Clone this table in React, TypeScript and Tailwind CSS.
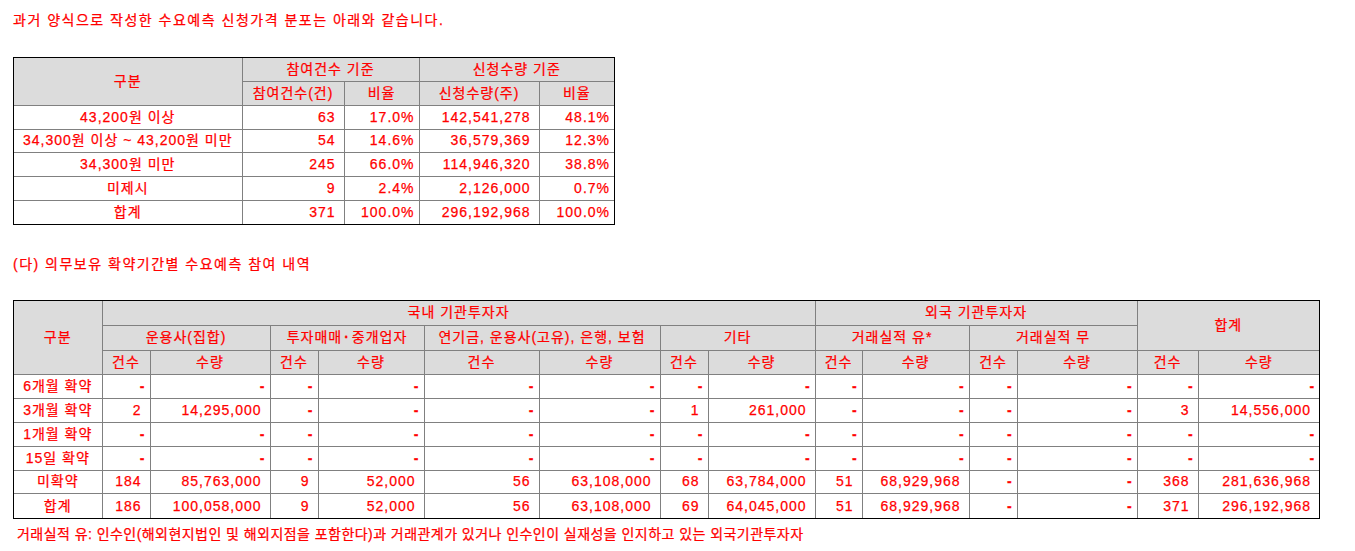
const font = "font-['Liberation_Sans','Noto_Sans_CJK_KR',sans-serif]";

const th = "border border-[#808080] bg-[#dcdcdc] text-center font-normal p-0";
const td = "border border-[#808080] p-0";

type Row1 = [string, string, string, string, string];

const table1: Row1[] = [
  ["43,200원 이상", "63", "17.0%", "142,541,278", "48.1%"],
  ["34,300원 이상 ~ 43,200원 미만", "54", "14.6%", "36,579,369", "12.3%"],
  ["34,300원 미만", "245", "66.0%", "114,946,320", "38.8%"],
  ["미제시", "9", "2.4%", "2,126,000", "0.7%"],
  ["합계", "371", "100.0%", "296,192,968", "100.0%"],
];

const table2: string[][] = [
  ["6개월 확약", "-", "-", "-", "-", "-", "-", "-", "-", "-", "-", "-", "-", "-", "-"],
  ["3개월 확약", "2", "14,295,000", "-", "-", "-", "-", "1", "261,000", "-", "-", "-", "-", "3", "14,556,000"],
  ["1개월 확약", "-", "-", "-", "-", "-", "-", "-", "-", "-", "-", "-", "-", "-", "-"],
  ["15일 확약", "-", "-", "-", "-", "-", "-", "-", "-", "-", "-", "-", "-", "-", "-"],
  ["미확약", "184", "85,763,000", "9", "52,000", "56", "63,108,000", "68", "63,784,000", "51", "68,929,968", "-", "-", "368", "281,636,968"],
  ["합계", "186", "100,058,000", "9", "52,000", "56", "63,108,000", "69", "64,045,000", "51", "68,929,968", "-", "-", "371", "296,192,968"],
];

const widths2 = [88, 48, 120, 48, 106, 115, 121, 48, 107, 47, 107, 48, 120, 61, 121];

function Num({ v }: { v: string }) {
  const pad = v === "-" || v.endsWith("%") ? "pr-[4px]" : "pr-[8px]";
  return (
    <td className={`${td} text-right ${pad}`}>
      {v === "-" ? <span className="font-bold">-</span> : v}
    </td>
  );
}

export default function App() {
  return (
    <div
      className={`${font} bg-white min-h-screen text-[14px] tracking-[1px] text-[#ff0000] px-[13px] pt-[12px] [-webkit-text-stroke:0.25px_#ff0000]`}
    >
      <p className="leading-[17px] tracking-[1.5px]">과거 양식으로 작성한 수요예측 신청가격 분포는 아래와 같습니다.</p>

      {/* 신청가격 분포 */}
      <div className="mt-[28px] w-[602px] border border-black">
        <table className="w-[600px] table-fixed border-collapse border-hidden leading-[17px]">
          <colgroup>
            <col className="w-[228px]" />
            <col className="w-[102px]" />
            <col className="w-[75px]" />
            <col className="w-[120px]" />
            <col className="w-[75px]" />
          </colgroup>
          <thead>
            <tr className="h-[23.7px]">
              <th rowSpan={2} className={th}>구분</th>
              <th colSpan={2} className={th}>참여건수 기준</th>
              <th colSpan={2} className={th}>신청수량 기준</th>
            </tr>
            <tr className="h-[23.7px]">
              <th className={th}>참여건수(건)</th>
              <th className={th}>비율</th>
              <th className={th}>신청수량(주)</th>
              <th className={th}>비율</th>
            </tr>
          </thead>
          <tbody>
            {table1.map((r) => (
              <tr key={r[0]} className="h-[23.7px]">
                <td className={`${td} text-center`}>{r[0]}</td>
                {r.slice(1).map((v, i) => (
                  <Num key={i} v={v} />
                ))}
              </tr>
            ))}
          </tbody>
        </table>
      </div>

      <p className="mt-[31px] leading-[17px] tracking-[1.5px]">(다) 의무보유 확약기간별 수요예측 참여 내역</p>

      {/* 확약기간별 */}
      <div className="mt-[27px] w-[1307px] border border-black">
        <table className="w-[1305px] table-fixed border-collapse border-hidden leading-[17px]">
          <colgroup>
            {widths2.map((w, i) => (
              <col key={i} style={{ width: w }} />
            ))}
          </colgroup>
          <thead>
            <tr className="h-[24.7px]">
              <th rowSpan={3} className={th}>구분</th>
              <th colSpan={8} className={th}>국내 기관투자자</th>
              <th colSpan={4} className={th}>외국 기관투자자</th>
              <th colSpan={2} rowSpan={2} className={th}>합계</th>
            </tr>
            <tr className="h-[24.7px]">
              <th colSpan={2} className={th}>운용사(집합)</th>
              <th colSpan={2} className={th}>
                투자매매<span className="mx-[2px] font-bold">·</span>중개업자
              </th>
              <th colSpan={2} className={th}>연기금, 운용사(고유), 은행, 보험</th>
              <th colSpan={2} className={th}>기타</th>
              <th colSpan={2} className={th}>거래실적 유*</th>
              <th colSpan={2} className={th}>거래실적 무</th>
            </tr>
            <tr className="h-[24.7px]">
              {Array.from({ length: 7 }).flatMap((_, i) => [
                <th key={`a${i}`} className={th}>건수</th>,
                <th key={`b${i}`} className={th}>수량</th>,
              ])}
            </tr>
          </thead>
          <tbody>
            {table2.map((r) => (
              <tr key={r[0]} className="h-[23.8px]">
                <td className={`${td} text-center`}>{r[0]}</td>
                {r.slice(1).map((v, i) => (
                  <Num key={i} v={v} />
                ))}
              </tr>
            ))}
          </tbody>
        </table>
      </div>

      <p className="mt-[7px] pl-[4px] leading-[17px] tracking-[0.45px]">
        거래실적 유: 인수인(해외현지법인 및 해외지점을 포함한다)과 거래관계가 있거나 인수인이 실재성을 인지하고 있는 외국기관투자자
      </p>
    </div>
  );
}
